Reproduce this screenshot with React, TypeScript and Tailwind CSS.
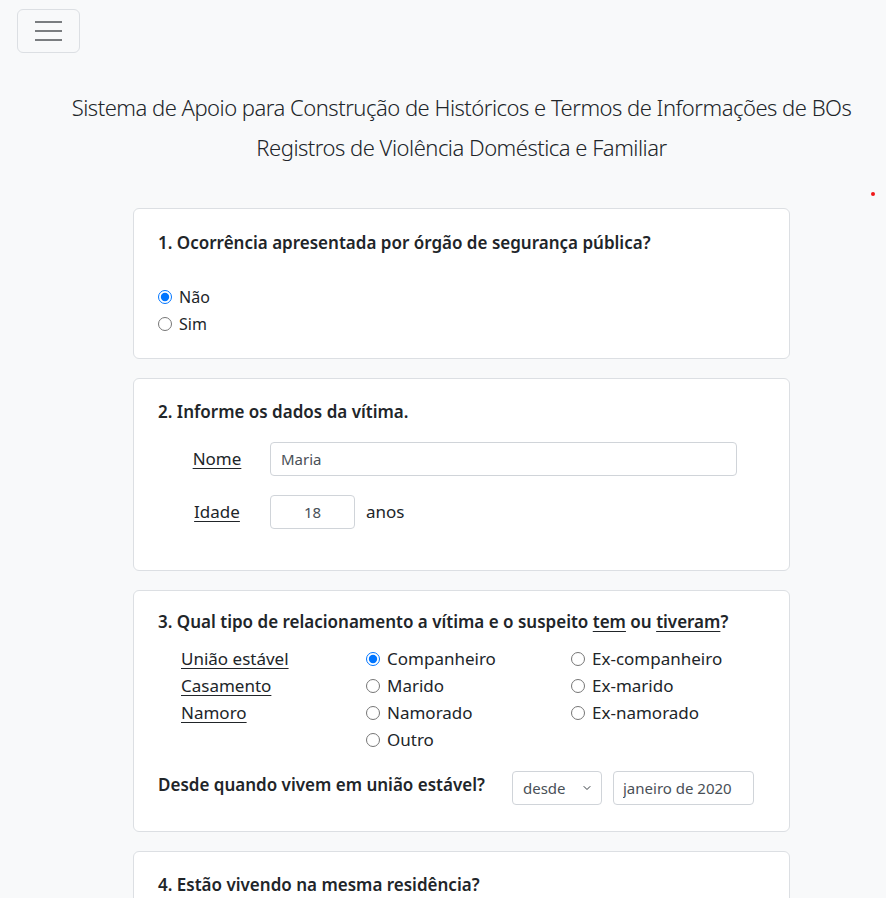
import { useState } from 'react';

const font = { fontFamily: '"Noto Sans", "Open Sans", sans-serif' };

function Radio({ name, label, checked, onChange }: { name: string; label: string; checked: boolean; onChange: () => void }) {
  return (
    <label className="flex items-center h-[27px] gap-[7px] cursor-pointer">
      <input type="radio" name={name} checked={checked} onChange={onChange} className="w-[14px] h-[14px] m-0" />
      <span>{label}</span>
    </label>
  );
}

function Card({ children, className = '' }: { children: React.ReactNode; className?: string }) {
  return (
    <div className={`bg-white border border-[#dcdfe3] rounded-[6px] px-6 ${className}`}>{children}</div>
  );
}

export default function App() {
  const [orgao, setOrgao] = useState('nao');
  const [rel, setRel] = useState('companheiro');
  const [nome, setNome] = useState('Maria');
  const [idade, setIdade] = useState('18');
  const [desde, setDesde] = useState('desde');
  const [data, setData] = useState('janeiro de 2020');

  const relOptions = [
    [null, 'companheiro', 'ex-companheiro'],
    [null, 'marido', 'ex-marido'],
    [null, 'namorado', 'ex-namorado'],
    [null, 'outro', null],
  ];
  const relLabels: Record<string, string> = {
    companheiro: 'Companheiro',
    'ex-companheiro': 'Ex-companheiro',
    marido: 'Marido',
    'ex-marido': 'Ex-marido',
    namorado: 'Namorado',
    'ex-namorado': 'Ex-namorado',
    outro: 'Outro',
  };
  const leftLabels = ['União estável', 'Casamento', 'Namoro', ''];

  return (
    <div className="min-h-screen bg-[#f8f9fa] text-[#212529] text-[16px] relative overflow-hidden" style={font}>
      {/* Navbar toggler */}
      <div className="pt-[9px] pl-[17px]">
        <button className="w-[63px] h-[44px] border border-[#dcdfe3] rounded-[6px] flex flex-col items-center justify-center gap-[7px]">
          <span className="block w-[27px] h-[2px] bg-[#7a7d80]" />
          <span className="block w-[27px] h-[2px] bg-[#7a7d80]" />
          <span className="block w-[27px] h-[2px] bg-[#7a7d80]" />
        </button>
      </div>

      <span className="absolute left-[871px] top-[192px] w-[4px] h-[4px] rounded-full bg-[#f01818]" />

      <main className="pl-[37px]">
        <div className="text-center font-light text-[22px] tracking-[-0.5px] leading-[40px] mt-[34px] whitespace-nowrap">
          <p>Sistema de Apoio para Construção de Históricos e Termos de Informações de BOs</p>
          <p>Registros de Violência Doméstica e Familiar</p>
        </div>

        <div className="w-[657px] mx-auto mt-[41px] flex flex-col gap-[19px] pb-10">
          {/* 1 */}
          <Card className="pt-[21px] pb-[21px]">
            <h5 className="font-semibold text-[17px] leading-[26px] mb-[27px]">1. Ocorrência apresentada por órgão de segurança pública?</h5>
            <Radio name="orgao" label="Não" checked={orgao === 'nao'} onChange={() => setOrgao('nao')} />
            <Radio name="orgao" label="Sim" checked={orgao === 'sim'} onChange={() => setOrgao('sim')} />
          </Card>

          {/* 2 */}
          <Card className="pt-[20px] pb-[41px]">
            <h5 className="font-semibold text-[17px] leading-[26px] mb-[17px]">2. Informe os dados da vítima.</h5>
            <div className="flex flex-col gap-[19px]">
              <div className="flex items-center">
                <span className="ml-[6px] w-[106px] text-center underline underline-offset-[3px] text-[17px]">Nome</span>
                <input
                  value={nome}
                  onChange={(e) => setNome(e.target.value)}
                  className="w-[467px] h-[34px] border border-[#d0d4d9] rounded-[4px] px-[10px] text-[15px] text-[#495057] outline-none"
                />
              </div>
              <div className="flex items-center">
                <span className="ml-[6px] w-[106px] text-center underline underline-offset-[3px] text-[17px]">Idade</span>
                <input
                  value={idade}
                  onChange={(e) => setIdade(e.target.value)}
                  className="w-[85px] h-[34px] border border-[#d0d4d9] rounded-[4px] px-[10px] text-[15px] text-center text-[#495057] outline-none"
                />
                <span className="ml-[11px] text-[17px]">anos</span>
              </div>
            </div>
          </Card>

          {/* 3 */}
          <Card className="pt-[18px] pb-[26px]">
            <h5 className="font-semibold text-[17px] leading-[26px] mb-[10px]">
              3. Qual tipo de relacionamento a vítima e o suspeito <span className="underline underline-offset-[3px]">tem</span> ou{' '}
              <span className="underline underline-offset-[3px]">tiveram</span>?
            </h5>
            <div className="pl-[23px]">
              {relOptions.map((row, i) => (
                <div key={i} className="flex h-[27px] items-center text-[17px]">
                  <span className="w-[185px] underline underline-offset-[3px]">{leftLabels[i]}</span>
                  <div className="w-[205px]">
                    {row[1] && <Radio name="rel" label={relLabels[row[1]]} checked={rel === row[1]} onChange={() => setRel(row[1] as string)} />}
                  </div>
                  <div>
                    {row[2] && <Radio name="rel" label={relLabels[row[2]]} checked={rel === row[2]} onChange={() => setRel(row[2] as string)} />}
                  </div>
                </div>
              ))}
            </div>
            <div className="flex items-center mt-[18px]">
              <span className="font-semibold text-[17px] w-[354px] -mt-[6px]">Desde quando vivem em união estável?</span>
              <div className="relative">
                <select
                  value={desde}
                  onChange={(e) => setDesde(e.target.value)}
                  className="appearance-none w-[90px] h-[34px] border border-[#d0d4d9] rounded-[4px] pl-[10px] pr-6 text-[15px] text-[#495057] bg-white outline-none"
                >
                  <option value="desde">desde</option>
                  <option value="ha">há</option>
                </select>
                <svg className="absolute right-[10px] top-[13px] pointer-events-none" width="10" height="8" viewBox="0 0 16 16">
                  <path d="M2 5l6 6 6-6" fill="none" stroke="#343a40" strokeWidth="2" strokeLinecap="round" strokeLinejoin="round" />
                </svg>
              </div>
              <input
                value={data}
                onChange={(e) => setData(e.target.value)}
                className="ml-[11px] w-[141px] h-[34px] border border-[#d0d4d9] rounded-[4px] px-[9px] text-[15px] text-[#495057] outline-none"
              />
            </div>
          </Card>

          {/* 4 */}
          <Card className="pt-[20px] pb-[24px] h-[200px]">
            <h5 className="font-semibold text-[17px] leading-[26px]">4. Estão vivendo na mesma residência?</h5>
          </Card>
        </div>
      </main>
    </div>
  );
}
